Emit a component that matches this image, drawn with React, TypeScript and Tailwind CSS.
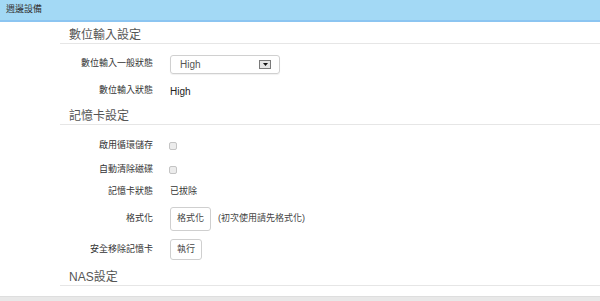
import React from 'react';

const FONT = { fontFamily: '"Liberation Sans", "Noto Sans CJK TC", sans-serif' };

const SectionHeading: React.FC<{ title: string; className?: string }> = ({ title, className = '' }) => (
  <div className={`border-b border-[#e6e6e6] pl-[9px] text-[12px] leading-none text-[#555] flex items-end pb-[2px] ${className}`}>
    {title}
  </div>
);

const Row: React.FC<{ label: string; className?: string; children?: React.ReactNode }> = ({ label, className = '', children }) => (
  <div className={`flex items-center ${className}`}>
    <div className="w-[93px] text-right text-[9px] text-[#333]">{label}</div>
    <div className="ml-[17px] flex items-center">{children}</div>
  </div>
);

const Checkbox: React.FC = () => (
  <div className="ml-[-1px] w-[8px] h-[8px] rounded-[2px] border border-[#c4c4c4] bg-[#ececec]" />
);

const Button: React.FC<{ text: string; className?: string }> = ({ text, className = '' }) => (
  <button className={`border border-[#cfcfcf] rounded-[3px] bg-white text-[9px] text-[#444] flex items-center justify-center ${className}`}>
    {text}
  </button>
);

const App: React.FC = () => {
  return (
    <div className="w-[600px] h-[301px] bg-white overflow-hidden flex flex-col" style={FONT}>
      <div className="h-[22px] shrink-0 bg-[#a3d9f5] border-b-2 border-[#8cc5f1] pl-[6px] flex items-center text-[9px] text-[#333]">
        週邊設備
      </div>

      <div className="ml-[60px] flex flex-col">
        <SectionHeading title="數位輸入設定" className="h-[22px]" />

        <Row label="數位輸入一般狀態" className="mt-[8px] h-[24px]">
          <div className="w-[110px] h-[19px] border border-[#d0d0d0] rounded-[3px] shadow-[0_1px_1px_rgba(0,0,0,0.06)] flex items-center justify-between pl-[9px] pr-[8px]">
            <span className="text-[10px] text-[#555]">High</span>
            <span className="w-[12px] h-[9px] border border-[#7a7a7a] bg-[#e6e6e6] flex items-center justify-center">
              <svg width="5" height="3" viewBox="0 0 5 3">
                <path d="M0 0 L5 0 L2.5 3 Z" fill="#111" />
              </svg>
            </span>
          </div>
        </Row>

        <Row label="數位輸入狀態" className="mt-[3px] h-[24px]">
          <span className="text-[10px] text-[#222]">High</span>
        </Row>

        <SectionHeading title="記憶卡設定" className="h-[22px]" />

        <Row label="啟用循環儲存" className="mt-[9px] h-[24px]">
          <Checkbox />
        </Row>
        <Row label="自動清除磁碟" className="h-[24px]">
          <Checkbox />
        </Row>
        <Row label="記憶卡狀態" className="h-[20px]">
          <span className="text-[9px] text-[#333]">已拔除</span>
        </Row>
        <Row label="格式化" className="mt-[5px] h-[24px]">
          <Button text="格式化" className="w-[41px] h-[24px]" />
          <span className="ml-[7px] text-[9px] text-[#444]">(初次使用請先格式化)</span>
        </Row>
        <Row label="安全移除記憶卡" className="mt-[8px] h-[21px]">
          <Button text="執行" className="w-[32px] h-[21px]" />
        </Row>

        <SectionHeading title="NAS設定" className="h-[26px]" />
      </div>

      <div className="mt-auto h-[5px] bg-[#e8e8e8] border-t border-[#dedede]" />
    </div>
  );
};

export default App;
